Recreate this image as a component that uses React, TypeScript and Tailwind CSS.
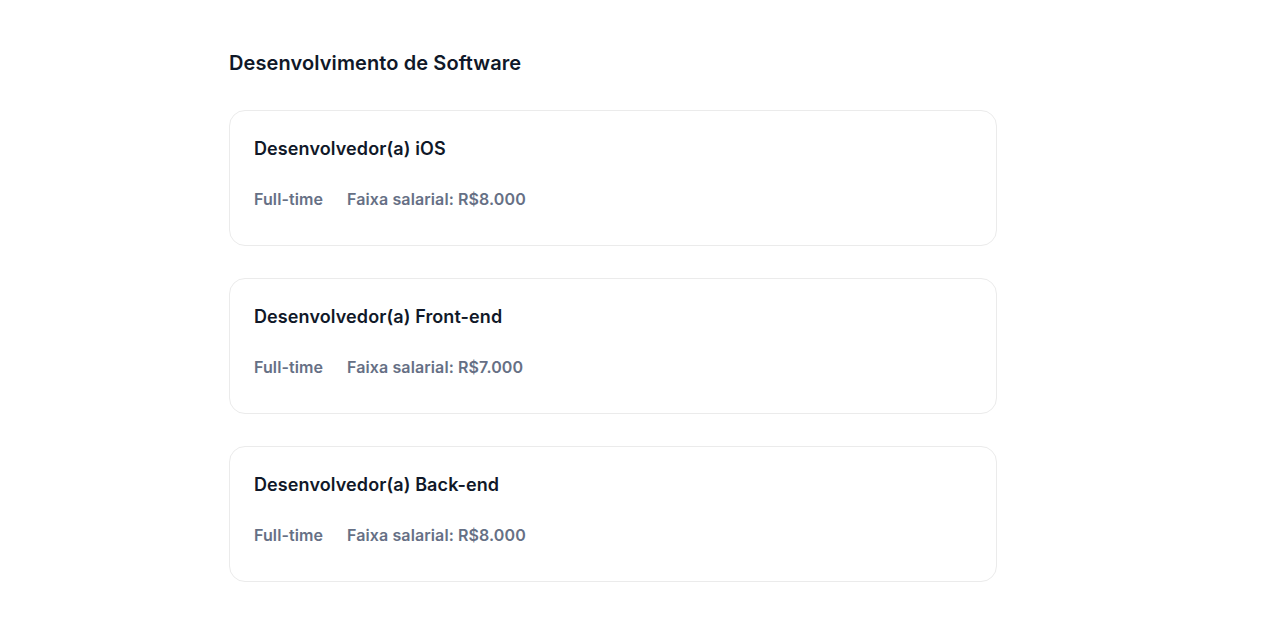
import React from 'react';

const jobs = [
  { title: 'Desenvolvedor(a) iOS', type: 'Full-time', salary: 'R$8.000' },
  { title: 'Desenvolvedor(a) Front-end', type: 'Full-time', salary: 'R$7.000' },
  { title: 'Desenvolvedor(a) Back-end', type: 'Full-time', salary: 'R$8.000' },
];

function JobCard({ title, type, salary }: { title: string; type: string; salary: string }) {
  return (
    <div className="w-[768px] rounded-2xl border border-[#ebebeb] bg-white px-6 pt-6 pb-[34px]">
      <h3 className="text-lg font-semibold tracking-[0.1px] text-gray-900">{title}</h3>
      <div className="mt-6 flex items-center gap-6 text-base font-semibold tracking-[0.1px] text-[#667085]">
        <span>{type}</span>
        <span>Faixa salarial: {salary}</span>
      </div>
    </div>
  );
}

export default function App() {
  return (
    <div className="min-h-screen bg-white" style={{ fontFamily: 'Inter, "Noto Sans", sans-serif' }}>
      <div className="mx-auto max-w-[819px] pt-[49px]">
        <h2 className="text-xl font-semibold tracking-[0.1px] text-gray-900">Desenvolvimento de Software</h2>
        <div className="mt-[33px] flex flex-col gap-8">
          {jobs.map((j) => (
            <JobCard key={j.title} {...j} />
          ))}
        </div>
      </div>
    </div>
  );
}
